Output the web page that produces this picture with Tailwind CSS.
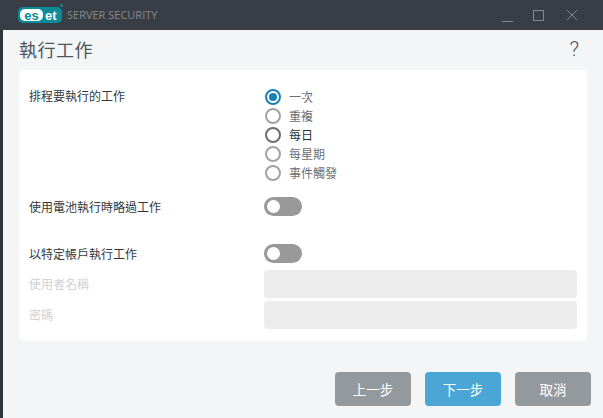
<!DOCTYPE html>
<html lang="zh-Hant">
<head>
<meta charset="UTF-8" />
<title>ESET Server Security</title>
<script src="https://cdn.jsdelivr.net/npm/@tailwindcss/browser@4"></script>
</head>
<body class="w-[603px] h-[418px] overflow-hidden bg-[#f3f5f7] font-['Noto_Sans_CJK_TC','Liberation_Sans',sans-serif]">
<div class="flex flex-col h-full border-l-[3px] border-[#2f353b]">
	<!-- title bar -->
	<div class="h-[30px] -ml-[3px] bg-[#393e46] flex items-center pl-[18px] shrink-0">
		<div class="relative w-[44px] h-[16px] bg-[#0a8c98] rounded-[5px] flex items-center pl-[2px] font-['Liberation_Sans',sans-serif] font-bold text-[13px] leading-none">
			<span class="bg-white text-[#0a8c98] rounded-[5px] h-[12px] w-[23px] flex items-center justify-center">es</span>
			<span class="text-white ml-[2px]">et</span>
			<span class="absolute -top-[3px] -right-[1px] w-[3px] h-[3px] rounded-full bg-[#0a8c98]"></span>
		</div>
		<span class="ml-[5px] font-['Open_Sans',sans-serif] text-[11px] text-[#85898e]">SERVER SECURITY</span>
		<div class="ml-auto flex items-center text-[#85898e]">
			<svg width="12" height="12" viewBox="0 0 12 12" class="mr-[19px] mt-[2px]"><path d="M0 11.5H11" stroke="#85898e" fill="none"/></svg>
			<svg width="12" height="12" viewBox="0 0 12 12" class="mr-[21px]"><rect x="0.5" y="1.5" width="10" height="10" stroke="#85898e" fill="none"/></svg>
			<svg width="12" height="12" viewBox="0 0 12 12" class="mr-[25px]"><path d="M1 1L11 11M11 1L1 11" stroke="#85898e" fill="none"/></svg>
		</div>
	</div>

	<!-- page title -->
	<div class="h-[40px] flex items-center pl-[16px] pr-[24px] shrink-0">
		<h1 class="text-[18px] text-[#50555c] tracking-[0.5px] -mt-[2px]">執行工作</h1>
		<span class="ml-auto font-['Roboto',sans-serif] font-light text-[21px] text-[#4b5159] leading-none -mt-[1px]">?</span>
	</div>

	<!-- form card -->
	<div class="ml-[16px] w-[568px] h-[271px] bg-white rounded-[5px] pt-[20px] shrink-0 text-[12px] leading-[16px] text-[#33373d]">
		<div class="grid grid-cols-[235px_1fr] pl-[10px] pr-[10px]">
			<div class="-mt-[2px]">排程要執行的工作</div>
			<div class="flex flex-col gap-[3px] pl-[1px] -mt-[1px]">
				<div class="flex items-center h-[16px] text-[#6b7076]">
					<span class="w-[16px] h-[16px] rounded-full border-[2px] border-[#1a81b5] flex items-center justify-center mr-[8px]"><span class="w-[8px] h-[8px] rounded-full bg-[#1a81b5]"></span></span>一次
				</div>
				<div class="flex items-center h-[16px] text-[#6b7076]">
					<span class="w-[16px] h-[16px] rounded-full border-[2px] border-[#a3a3a3] mr-[8px]"></span>重複
				</div>
				<div class="flex items-center h-[16px] text-[#2c3036]">
					<span class="w-[16px] h-[16px] rounded-full border-[2px] border-[#6e6e6e] mr-[8px]"></span>每日
				</div>
				<div class="flex items-center h-[16px] text-[#6b7076]">
					<span class="w-[16px] h-[16px] rounded-full border-[2px] border-[#a3a3a3] mr-[8px]"></span>每星期
				</div>
				<div class="flex items-center h-[16px] text-[#6b7076]">
					<span class="w-[16px] h-[16px] rounded-full border-[2px] border-[#a3a3a3] mr-[8px]"></span>事件觸發
				</div>
			</div>
		</div>

		<div class="grid grid-cols-[235px_1fr] items-center pl-[10px] pr-[10px] mt-[16px]">
			<div>使用電池執行時略過工作</div>
			<div class="w-[38px] h-[19px] rounded-full bg-[#999999] flex items-center pl-[3px]"><span class="w-[13px] h-[13px] rounded-full bg-white"></span></div>
		</div>

		<div class="grid grid-cols-[235px_1fr] items-center pl-[10px] pr-[10px] mt-[28px]">
			<div>以特定帳戶執行工作</div>
			<div class="w-[38px] h-[19px] rounded-full bg-[#999999] flex items-center pl-[3px]"><span class="w-[13px] h-[13px] rounded-full bg-white"></span></div>
		</div>

		<div class="grid grid-cols-[235px_1fr] items-center pl-[10px] pr-[10px] mt-[7px] text-[#d0d1d3]">
			<div>使用者名稱</div>
			<div class="h-[28px] rounded-[4px] bg-[#ececec]"></div>
		</div>
		<div class="grid grid-cols-[235px_1fr] items-center pl-[10px] pr-[10px] mt-[3px] text-[#d0d1d3]">
			<div>密碼</div>
			<div class="h-[28px] rounded-[4px] bg-[#ececec]"></div>
		</div>
	</div>

	<!-- wizard buttons -->
	<div class="flex justify-end gap-[14px] pr-[12px] mt-[31px] text-[13.5px] text-white">
		<button class="w-[76px] h-[34px] rounded-[4px] bg-[#94999e]">上一步</button>
		<button class="w-[76px] h-[34px] rounded-[4px] bg-[#4ba6d5]">下一步</button>
		<button class="w-[76px] h-[34px] rounded-[4px] bg-[#94999e]">取消</button>
	</div>
</div>
</body>
</html>
